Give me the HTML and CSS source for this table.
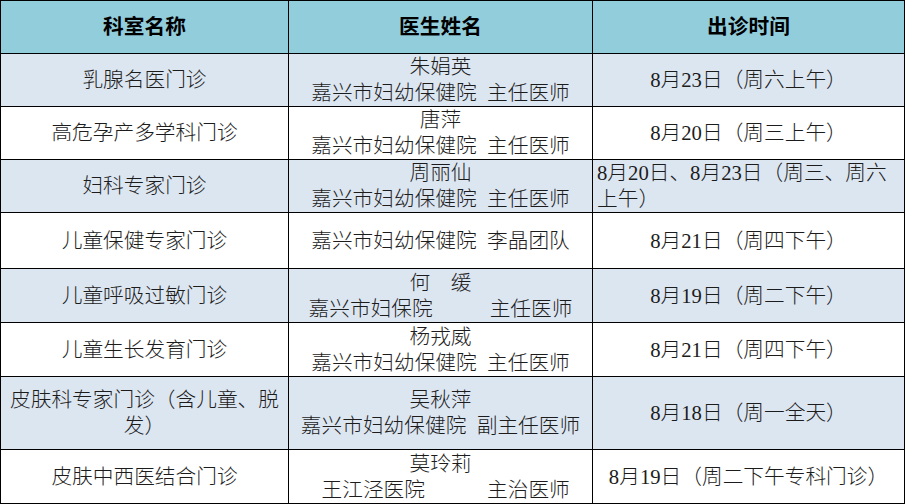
FILE: index.html
```html
<!DOCTYPE html>
<html lang="zh-CN">
<head>
<meta charset="utf-8">
<title>出诊时间表</title>
<link rel="stylesheet" href="styles.css">
</head>
<body>
<table class="schedule">
  <colgroup>
    <col class="col-dept">
    <col class="col-doctor">
    <col class="col-time">
  </colgroup>
  <thead>
    <tr class="row-head">
      <th>科室名称</th>
      <th>医生姓名</th>
      <th>出诊时间</th>
    </tr>
  </thead>
  <tbody>
    <tr class="row-alt">
      <td>乳腺名医门诊</td>
      <td class="doctor">朱娟英<br>嘉兴市妇幼保健院  主任医师</td>
      <td>8月23日（周六上午）</td>
    </tr>
    <tr>
      <td>高危孕产多学科门诊</td>
      <td class="doctor">唐萍<br>嘉兴市妇幼保健院  主任医师</td>
      <td>8月20日（周三上午）</td>
    </tr>
    <tr class="row-alt">
      <td>妇科专家门诊</td>
      <td class="doctor">周丽仙<br>嘉兴市妇幼保健院  主任医师</td>
      <td class="left">8月20日、8月23日（周三、周六<br>上午）</td>
    </tr>
    <tr class="row-56">
      <td>儿童保健专家门诊</td>
      <td class="doctor">嘉兴市妇幼保健院  李晶团队</td>
      <td>8月21日（周四下午）</td>
    </tr>
    <tr class="row-alt row-54">
      <td>儿童呼吸过敏门诊</td>
      <td class="doctor">何　缓<br>嘉兴市妇保院　　   主任医师</td>
      <td>8月19日（周二下午）</td>
    </tr>
    <tr class="row-54">
      <td>儿童生长发育门诊</td>
      <td class="doctor">杨戎威<br>嘉兴市妇幼保健院  主任医师</td>
      <td>8月21日（周四下午）</td>
    </tr>
    <tr class="row-alt row-73">
      <td>皮肤科专家门诊（含儿童、脱<br>发）</td>
      <td class="doctor">吴秋萍<br>嘉兴市妇幼保健院  副主任医师</td>
      <td>8月18日（周一全天）</td>
    </tr>
    <tr class="row-54">
      <td>皮肤中西医结合门诊</td>
      <td class="doctor">莫玲莉<br>  王江泾医院　　　主治医师</td>
      <td>8月19日（周二下午专科门诊）</td>
    </tr>
  </tbody>
</table>
</body>
</html>
```

FILE: styles.css
```css
html, body {
  margin: 0;
  padding: 0;
  background: #ffffff;
}

.schedule {
  border-collapse: collapse;
  table-layout: fixed;
  width: 904px;
  font-family: "Liberation Serif", "Noto Sans CJK SC", serif;
  font-size: 20.7px;
  line-height: 26px;
  font-weight: 300;
  color: #1c1c1c;
}

.col-dept { width: 288px; }
.col-doctor { width: 304px; }
.col-time { width: 312px; }

.schedule th,
.schedule td {
  border: 1px solid #000;
  padding: 0;
  text-align: center;
  vertical-align: middle;
  white-space: pre;
  overflow: hidden;
}

.schedule th {
  font-weight: 700;
  color: #000;
  background: #92cddc;
}

.row-head { height: 53px; }

.schedule tbody tr { height: 53px; }
.schedule tbody tr.row-54 { height: 54px; }
.schedule tbody tr.row-56 { height: 56px; }
.schedule tbody tr.row-73 { height: 73px; }

.row-alt td { background: #dce6f1; }

.schedule td.left {
  text-align: left;
  padding-left: 4px;
}
```
